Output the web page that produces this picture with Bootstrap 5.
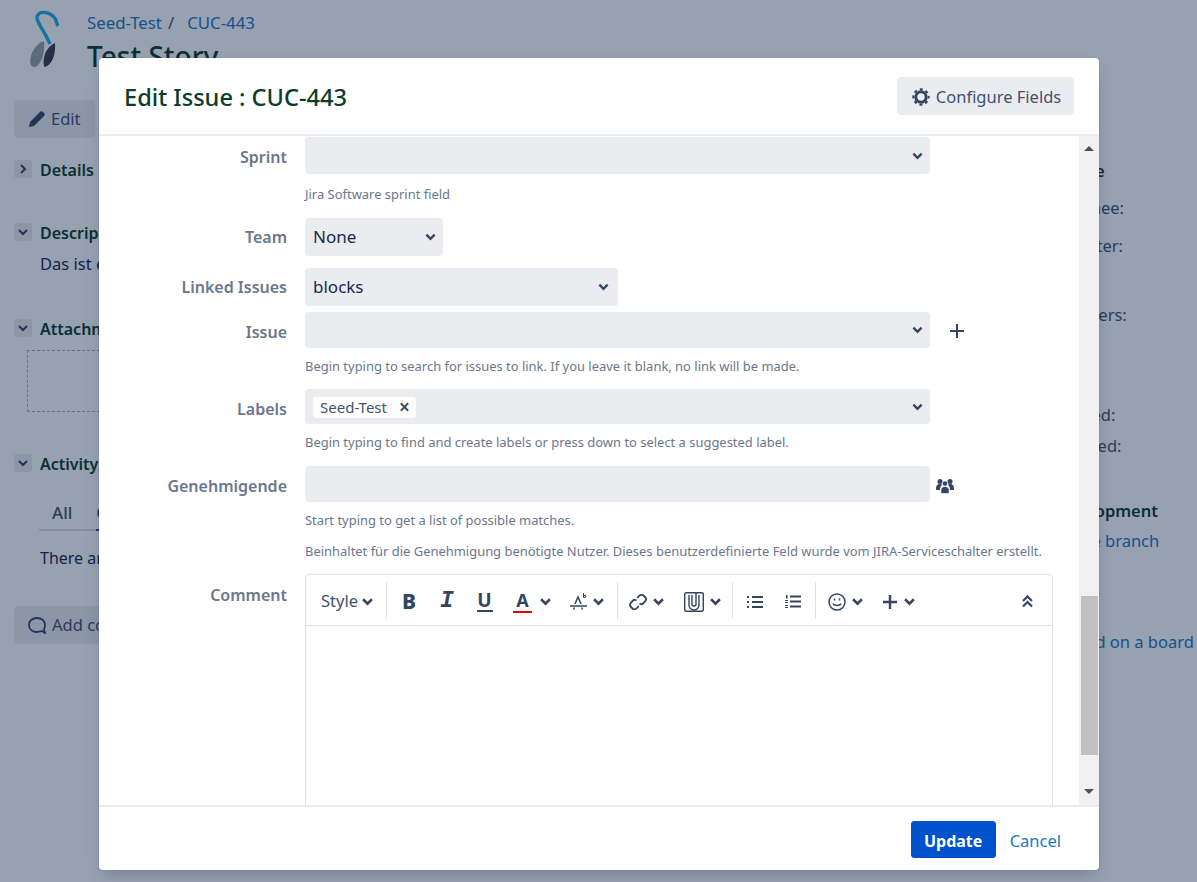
<!DOCTYPE html>
<html>
<head>
    <meta charset="utf-8">
    <title>Edit Issue : CUC-443</title>
    <link rel="stylesheet" href="https://cdn.jsdelivr.net/npm/bootstrap@5.3.0/dist/css/bootstrap.min.css">
    <style>
        body {
            font-family: "Noto Sans", "Open Sans", sans-serif;
            font-size: 16.5px;
            color: #172b4d;
            background: #fff;
            width: 1197px;
            height: 882px;
            overflow: hidden;
            position: relative;
        }

        a { color: #2079c3; text-decoration: none; }

        /* page behind the dialog */
        .issue-page { display: flex; height: 882px; overflow: hidden; }
        .issue-main { width: 1050px; flex: none; padding-left: 14px; }
        .issue-side { flex: none; width: 147px; line-height: 24px; padding-top: 159px; white-space: nowrap; color: #42526e; }
        .issue-head { height: 100px; display: flex; }
        .issue-logo { width: 73px; flex: none; padding: 10px 0 0 12px; }
        .crumbs { line-height: 24px; padding-top: 11px; white-space: nowrap; font-size: 16.800px; }
        .crumbs span { color: #42526e; margin: 0 13px 0 6px; }
        .issue-title { font-size: 28px; font-weight: 500; color: #0a3d2a; line-height: 40px; margin: 1px 0 0; white-space: nowrap; }
        .page-btn { height: 38px; background: #ebecf0; border: 0; border-radius: 4px; color: #42526e; display: flex; align-items: center; gap: 5px; padding: 0 14px; width: 81px; }
        .page-btn.wide { width: 300px; gap: 6px; }
        .mod-row { display: flex; align-items: center; height: 18px; gap: 8px; font-size: 16px; font-weight: 600; color: #0a3d2a; white-space: nowrap; }
        .mod-txt { padding-top: 2px; }
        .tw-box { width: 18px; height: 18px; flex: none; background: #ebecf0; border-radius: 3px; display: flex; align-items: center; justify-content: center; }
        .top-details { margin-top: 22px; }
        .top-desc { margin-top: 45px; }
        .top-attach { margin-top: 43px; }
        .top-activity { margin-top: 42px; }
        .desc-text { margin: 11px 0 0 26px; line-height: 24px; }
        .drop-box { margin: 13px 0 0 13px; height: 62px; border: 1px dashed #a5adba; }
        .act-tabs { margin: 24px 0 0 25px; height: 35px; border-bottom: 2px solid #dfe1e6; display: flex; gap: 24px; line-height: 33px; color: #42526e; font-weight: 500; font-size: 17px; padding-left: 13px; }
        .act-cur { height: 35px; border-bottom: 2px solid #0052cc; }
        .act-note { margin: 15px 0 0 26px; line-height: 24px; font-size: 16px; }
        .top-comment { margin-top: 36px; }
        .side-h { font-weight: 600; color: #0a3d2a; }
        .s13 { margin-top: 13px; } .s14 { margin-top: 14px; } .s45 { margin-top: 45px; } .s76 { margin-top: 76px; }
        .s7 { margin-top: 7px; } .s41 { margin-top: 41px; } .s6 { margin-top: 6px; } .s77 { margin-top: 77px; }
        .page-dim { position: absolute; inset: 0; background: rgba(9, 30, 66, .42); }

        /* dialog */
        .edit-dialog { position: absolute; left: 99px; top: 58px; width: 1000px; height: 812px; background: #fff; border: 0; border-radius: 4px; box-shadow: 0 8px 16px -4px rgba(9, 30, 66, .25), 0 0 1px rgba(9, 30, 66, .31); overflow: hidden; }
        .edit-dialog .modal-header { height: 78px; flex: none; border-bottom: 2px solid #ebecf0; border-radius: 0; padding: 0 25px; }
        .dlg-title { font-size: 23.600px; font-weight: 500; color: #0a3d2a; margin: 0; position: relative; top: 1px; }
        .cfg-btn { height: 38px; width: 177px; background: #ebecf0; border: 0; border-radius: 4px; color: #42526e; display: flex; align-items: center; justify-content: center; gap: 6px; font-size: 16.500px; padding: 2px 0 0 2px; }
        .edit-dialog .modal-body { flex: none; height: 669px; padding: 0; display: flex; overflow: hidden; }
        .form-pane { width: 980px; flex: none; padding-top: 1px; }
        .edit-dialog .modal-footer { flex: none; height: 65px; padding: 0 38px 0 0; border-top: 2px solid #ebecf0; border-radius: 0; gap: 14px; flex-wrap: nowrap; }
        .edit-dialog .modal-footer > * { margin: 0; }
        .save-btn { background: #0052cc; border-color: #0052cc; font-weight: 700; font-size: 16px; width: 85px; height: 37px; padding: 2px 0 0; border-radius: 3px; position: relative; top: 1px; }
        .cancel-lnk { position: relative; top: 3px; font-size: 16.500px; }

        .scroll-bar { width: 20px; flex: none; background: #f1f1f1; display: flex; flex-direction: column; align-items: center; }
        .scroll-up { width: 0; height: 0; margin-top: 10px; border: 5px solid transparent; border-top: 0; border-bottom-color: #505050; }
        .scroll-thumb { width: 17px; height: 159px; background: #c1c1c1; margin-top: 445px; }
        .scroll-down { width: 0; height: 0; margin-top: 34px; border: 5px solid transparent; border-bottom: 0; border-top-color: #505050; }

        .fld-row { display: flex; align-items: center; }
        .fld-lbl { width: 188px; flex: none; margin: 0 18px 0 0; text-align: right; font-weight: 600; color: #6b778c; font-size: 16px; padding: 0; position: relative; top: 1px; }
        .lbl-up { top: 0; }
        .lbl-down { top: 2px; }
        .fld-hint { margin-left: 206px; font-size: 12.950px; line-height: 18px; color: #6b778c; white-space: nowrap; }
        .form-select.fld-sel, .form-control.fld-sel {
            background-color: #ebecf0;
            border: 0;
            border-radius: 4px;
            color: #172b4d;
            font-size: 17px;
            padding: 0 30px 0 8px;
            flex: none;
            box-shadow: none;
        }
        .form-select.fld-sel {
            background-image: url("data:image/svg+xml,%3csvg xmlns='http://www.w3.org/2000/svg' viewBox='0 0 12 8'%3e%3cpath fill='none' stroke='%23344563' stroke-width='2.6' d='M1.5 1.5 6 6l4.5-4.5'/%3e%3c/svg%3e");
            background-size: 11px 8px;
            background-position: right 7px center;
        }
        .w-full { width: 625px; }
        .w-team { width: 138px; }
        .w-link { width: 313px; background-position: right 9px center !important; }
        .h36 { height: 36px; } .h37 { height: 37px; } .h38 { height: 38px; } .h35 { height: 35px; }
        .m15 { margin-top: 15px; } .m12 { margin-top: 12px; } .m6 { margin-top: 6px; } .m14 { margin-top: 14px; }
        .m9 { margin-top: 9px; } .m11 { margin-top: 11px; } .m13 { margin-top: 13px; }
        .plus-ic { margin: 2px 0 0 19px; }
        .team-ic { margin: 3px 0 0 6px; }
        .lbl-wrap { position: relative; width: 625px; height: 35px; flex: none; }
        .lbl-chip { position: absolute; left: 8px; top: 8px; height: 21px; width: 103px; background: #fff; border-radius: 3px; font-size: 15px; display: flex; align-items: center; padding-left: 7px; gap: 12px; color: #42526e; }
        .chip-x { font-size: 19px; line-height: 1; color: #344563; font-weight: 600; }

        .rte-box { flex: none; width: 748px; height: 300px; border: 1px solid #dfe1e6; border-radius: 4px 4px 0 0; }
        .fld-row.top-al { align-items: flex-start; }
        .top-al .fld-lbl { top: 9px; }
        .rte-bar { height: 51px; border-bottom: 1px solid #dfe1e6; padding-top: 7px; display: flex; align-items: flex-start; color: #344563; }
        .rte-grp { display: flex; height: 37px; align-items: center; border-right: 1px solid #dfe1e6; flex: none; }
        .rte-grp.last { border-right: 0; }
        .g1 { width: 81px; padding: 2px 0 0 15px; gap: 4px; font-size: 16.500px; color: #42526e; }
        .g2 { width: 231px; padding-left: 3px; }
        .g3 { width: 115px; }
        .g4 { width: 83px; padding-left: 3px; }
        .rte-btn { display: flex; align-items: center; justify-content: center; flex: none; height: 37px; padding-top: 2px; }
        .b38 { width: 38px; } .b37 { width: 37px; } .b58 { width: 58px; gap: 8px; } .b51 { width: 51px; gap: 5px; }
        .b57 { width: 57px; gap: 6px; } .b55 { width: 55px; gap: 6px; }
        .ch-b { font: 800 21px/1 "Noto Sans", sans-serif; }
        .ch-i { font: italic 700 23px/1 "Liberation Mono", monospace; }
        .ch-u { font: 700 19px/19px "Noto Sans", sans-serif; border-bottom: 2px solid #344563; height: 21px; width: 16px; text-align: center; }
        .ch-a { font: 700 18px/19px "Noto Sans", sans-serif; border-bottom: 2px solid #e00; height: 22px; width: 19px; text-align: center; }
        .rte-end { margin-left: auto; margin-right: 19px; height: 37px; display: flex; align-items: center; padding-top: 2px; }
    </style>
</head>
<body>

<div class="issue-page">
    <div class="issue-main">
        <div class="issue-head">
            <div class="issue-logo">
                <svg width="34" height="60" viewBox="0 0 34 60">
                    <path d="M32 16C30 13 31 9 27 6 22 2 13 0 11 7 10 12 19 22 22 30L24 34" fill="none" stroke="#1cb0e6" stroke-width="3.4"/>
                    <path d="M18 31C10 33 4 44 4 52 5 57 8 58 11 56 16 52 19 42 18 31z" fill="#97a0a8"/>
                    <path d="M29 33C24 35 19 41 18 48 17 53 18 57 19 57 26 55 30 44 29 33z" fill="#3e3d4b"/>
                </svg>
            </div>
            <div>
                <div class="crumbs"><a href="#">Seed-Test</a><span>/</span><a href="#">CUC-443</a></div>
                <h1 class="issue-title">Test Story</h1>
            </div>
        </div>
        <button class="page-btn" type="button">
            <svg width="18" height="18" viewBox="0 0 18 18"><path d="M1 17l1-5L12 2c1-1 2-1 3 0l1 1c1 1 1 2 0 3L6 16z" fill="#344563"/></svg>Edit
        </button>
        <div class="mod-row top-details"><span class="tw-box"><svg width="8" height="10" viewBox="0 0 8 10"><path d="M2 1l4 4-4 4" fill="none" stroke="#344563" stroke-width="2"/></svg></span><span class="mod-txt">Details</span></div>
        <div class="mod-row top-desc"><span class="tw-box"><svg width="10" height="8" viewBox="0 0 10 8"><path d="M1 2l4 4 4-4" fill="none" stroke="#344563" stroke-width="2"/></svg></span><span class="mod-txt">Description</span></div>
        <div class="desc-text">Das ist ein Test</div>
        <div class="mod-row top-attach"><span class="tw-box"><svg width="10" height="8" viewBox="0 0 10 8"><path d="M1 2l4 4 4-4" fill="none" stroke="#344563" stroke-width="2"/></svg></span><span class="mod-txt">Attachments</span></div>
        <div class="drop-box"></div>
        <div class="mod-row top-activity"><span class="tw-box"><svg width="10" height="8" viewBox="0 0 10 8"><path d="M1 2l4 4 4-4" fill="none" stroke="#344563" stroke-width="2"/></svg></span><span class="mod-txt">Activity</span></div>
        <div class="act-tabs"><span>All</span><span class="act-cur">Comments</span></div>
        <div class="act-note">There are no comments yet</div>
        <button class="page-btn wide top-comment" type="button">
            <svg width="18" height="18" viewBox="0 0 18 18"><path d="M14 15l3 2-1-4c1-1 1-3 1-4 0-4-3-7-8-7S1 5 1 9s3 7 8 7c2 0 3-.4 5-1z" fill="none" stroke="#344563" stroke-width="1.8"/></svg>Add comment
        </button>
    </div>
    <div class="issue-side">
        <div class="side-h">People</div>
        <div class="s13">Assignee:</div>
        <div class="s14">Reporter:</div>
        <div class="s45">Watchers:</div>
        <div class="s76">Created:</div>
        <div class="s7">Updated:</div>
        <div class="side-h s41">Development</div>
        <div class="s6"><a href="#">Create branch</a></div>
        <div class="s77"><a href="#">Viewed on a board</a></div>
    </div>
</div>
<div class="page-dim"></div>

<div class="modal-content edit-dialog">
    <div class="modal-header">
        <h2 class="dlg-title">Edit Issue : CUC-443</h2>
        <button class="cfg-btn ms-auto" type="button">
            <svg width="18" height="18" viewBox="0 0 18 18">
                <circle cx="9" cy="9" r="5.2" fill="none" stroke="#344563" stroke-width="3"/>
                <circle cx="9" cy="9" r="7.7" fill="none" stroke="#344563" stroke-width="2" stroke-dasharray="3 3.05" stroke-dashoffset="1.5"/>
            </svg>
            Configure Fields
        </button>
    </div>
    <div class="modal-body">
        <form class="form-pane">
            <div class="fld-row">
                <label class="fld-lbl">Sprint</label>
                <select class="form-select fld-sel w-full h37"><option></option></select>
            </div>
            <div class="fld-hint m11">Jira Software sprint field</div>

            <div class="fld-row m15">
                <label class="fld-lbl lbl-up">Team</label>
                <select class="form-select fld-sel w-team h38"><option>None</option></select>
            </div>
            <div class="fld-row m12">
                <label class="fld-lbl lbl-up">Linked Issues</label>
                <select class="form-select fld-sel w-link h38"><option>blocks</option></select>
            </div>
            <div class="fld-row m6">
                <label class="fld-lbl lbl-down">Issue</label>
                <select class="form-select fld-sel w-full h36"><option></option></select>
                <svg class="plus-ic" width="16" height="16" viewBox="0 0 16 16"><path d="M8 1v14M1 8h14" stroke="#344563" stroke-width="2"/></svg>
            </div>
            <div class="fld-hint m9">Begin typing to search for issues to link. If you leave it blank, no link will be made.</div>

            <div class="fld-row m14">
                <label class="fld-lbl lbl-down">Labels</label>
                <div class="lbl-wrap">
                    <select class="form-select fld-sel w-full h35"><option></option></select>
                    <span class="lbl-chip">Seed-Test <span class="chip-x">×</span></span>
                </div>
            </div>
            <div class="fld-hint m9">Begin typing to find and create labels or press down to select a suggested label.</div>

            <div class="fld-row m15">
                <label class="fld-lbl lbl-down">Genehmigende</label>
                <input class="form-control fld-sel w-full h36" type="text">
                <svg class="team-ic" width="18" height="16" viewBox="0 0 18 16" fill="#344563">
                    <circle cx="4" cy="3.5" r="2.5"/><circle cx="14" cy="3.5" r="2.5"/>
                    <path d="M0 11c0-3 1-5 4-5 1 0 1.500.3 2 .7C5 8 4 9 4 12H0zM18 11c0-3-1-5-4-5-1 0-1.500.3-2 .7 1 1.300 2 2.300 2 5.300h4z"/>
                    <circle cx="9" cy="5.500" r="2.600" stroke="#fff" stroke-width=".6"/>
                    <path d="M5 15.500v-3.500c0-2 1.500-3.500 4-3.500s4 1.500 4 3.500v3.500z" stroke="#fff" stroke-width=".6"/>
                </svg>
            </div>
            <div class="fld-hint m9">Start typing to get a list of possible matches.</div>
            <div class="fld-hint m13">Beinhaltet für die Genehmigung benötigte Nutzer. Dieses benutzerdefinierte Feld wurde vom JIRA-Serviceschalter erstellt.</div>

            <div class="fld-row top-al m14">
                <label class="fld-lbl">Comment</label>
                <div class="rte-box">
                    <div class="rte-bar">
                        <div class="rte-grp g1">Style
                            <svg width="11" height="8" viewBox="0 0 10 7"><path d="M1 1l4 4 4-4" fill="none" stroke="#344563" stroke-width="2.300"/></svg>
                        </div>
                        <div class="rte-grp g2">
                            <span class="rte-btn b38"><span class="ch-b">B</span></span>
                            <span class="rte-btn b38"><span class="ch-i">I</span></span>
                            <span class="rte-btn b37"><span class="ch-u">U</span></span>
                            <span class="rte-btn b58"><span class="ch-a">A</span>
                                <svg width="11" height="8" viewBox="0 0 10 7"><path d="M1 1l4 4 4-4" fill="none" stroke="#344563" stroke-width="2.300"/></svg></span>
                            <span class="rte-btn b51">
                                <svg width="18" height="18" viewBox="0 0 18 18" fill="none" stroke="#344563" stroke-width="1.500">
                                    <path d="M3.500 16.500l.8-2M12.500 16.500l-.8-2M5 11l3-7 3 7M0 13h17"/><path d="M13.500 0v4.500M13.500 2.500h2v2h-2" stroke-width="1"/>
                                </svg>
                                <svg width="11" height="8" viewBox="0 0 10 7"><path d="M1 1l4 4 4-4" fill="none" stroke="#344563" stroke-width="2.300"/></svg></span>
                        </div>
                        <div class="rte-grp g3">
                            <span class="rte-btn b57">
                                <svg width="18" height="18" viewBox="0 0 18 18" fill="none" stroke="#344563" stroke-width="1.800">
                                    <path d="M7.500 7.500l-1-.5c-1-.5-2 0-2.500.5L2 9.500c-1.300 1.500-1 3.500 0 4.500l1.500 1.500c1 1 3 1 4.300-.3l2-2"/>
                                    <path d="M10.500 10.500l1 .5c1 .5 2 0 2.500-.5l2-2c1.300-1.500 1-3.500 0-4.500l-1.500-1.500c-1-1-3-1-4.300.3l-2 2"/>
                                </svg>
                                <svg width="11" height="8" viewBox="0 0 10 7"><path d="M1 1l4 4 4-4" fill="none" stroke="#344563" stroke-width="2.300"/></svg></span>
                            <span class="rte-btn b55">
                                <svg width="20" height="20" viewBox="0 0 20 20" fill="none" stroke="#344563" stroke-width="1.400">
                                    <rect x=".7" y=".7" width="18.600" height="18.600" rx="1.500"/>
                                    <path d="M5 3v10a5 5 0 0 0 10 0V3"/><path d="M8 3v9a2 2 0 0 0 4 0V1"/>
                                </svg>
                                <svg width="11" height="8" viewBox="0 0 10 7"><path d="M1 1l4 4 4-4" fill="none" stroke="#344563" stroke-width="2.300"/></svg></span>
                        </div>
                        <div class="rte-grp g4">
                            <span class="rte-btn b38">
                                <svg width="16" height="12" viewBox="0 0 16 12" fill="#344563"><rect width="2" height="2"/><rect y="5" width="2" height="2"/><rect y="10" width="2" height="2"/><rect x="5" width="11" height="2"/><rect x="5" y="5" width="11" height="2"/><rect x="5" y="10" width="11" height="2"/></svg>
                            </span>
                            <span class="rte-btn b38">
                                <svg width="16" height="13" viewBox="0 0 16 13" fill="#344563"><rect x="1" width="1.500" height="3.500"/><rect y="5" width="3" height="1"/><rect y="7" width="3" height="1"/><rect y="10" width="3" height="1"/><rect y="12" width="3" height="1"/><rect x="5" y=".5" width="11" height="2"/><rect x="5" y="5.500" width="11" height="2"/><rect x="5" y="10.500" width="11" height="2"/></svg>
                            </span>
                        </div>
                        <div class="rte-grp last">
                            <span class="rte-btn b55 ps-1">
                                <svg width="18" height="18" viewBox="0 0 18 18" fill="none" stroke="#344563" stroke-width="1.500">
                                    <circle cx="9" cy="9" r="8"/><path d="M5 10.500c1 2.500 7 2.500 8 0"/><path d="M6.500 5.500v2M11.500 5.500v2"/>
                                </svg>
                                <svg width="11" height="8" viewBox="0 0 10 7"><path d="M1 1l4 4 4-4" fill="none" stroke="#344563" stroke-width="2.300"/></svg></span>
                            <span class="rte-btn b55">
                                <svg width="16" height="16" viewBox="0 0 16 16"><path d="M8 1v14M1 8h14" stroke="#344563" stroke-width="2.400"/></svg>
                                <svg width="11" height="8" viewBox="0 0 10 7"><path d="M1 1l4 4 4-4" fill="none" stroke="#344563" stroke-width="2.300"/></svg></span>
                        </div>
                        <div class="rte-end">
                            <svg width="11" height="13" viewBox="0 0 11 13"><path d="M1 6l4.500-4.500L10 6M1 11.500 5.500 7l4.500 4.500" fill="none" stroke="#344563" stroke-width="2.200"/></svg>
                        </div>
                    </div>
                </div>
            </div>
        </form>
        <div class="scroll-bar">
            <div class="scroll-up"></div>
            <div class="scroll-thumb"></div>
            <div class="scroll-down"></div>
        </div>
    </div>
    <div class="modal-footer">
        <button class="btn btn-primary save-btn" type="button">Update</button>
        <a class="cancel-lnk" href="#">Cancel</a>
    </div>
</div>

<script src="https://cdn.jsdelivr.net/npm/bootstrap@5.3.0/dist/js/bootstrap.bundle.min.js"></script>
</body>
</html>
